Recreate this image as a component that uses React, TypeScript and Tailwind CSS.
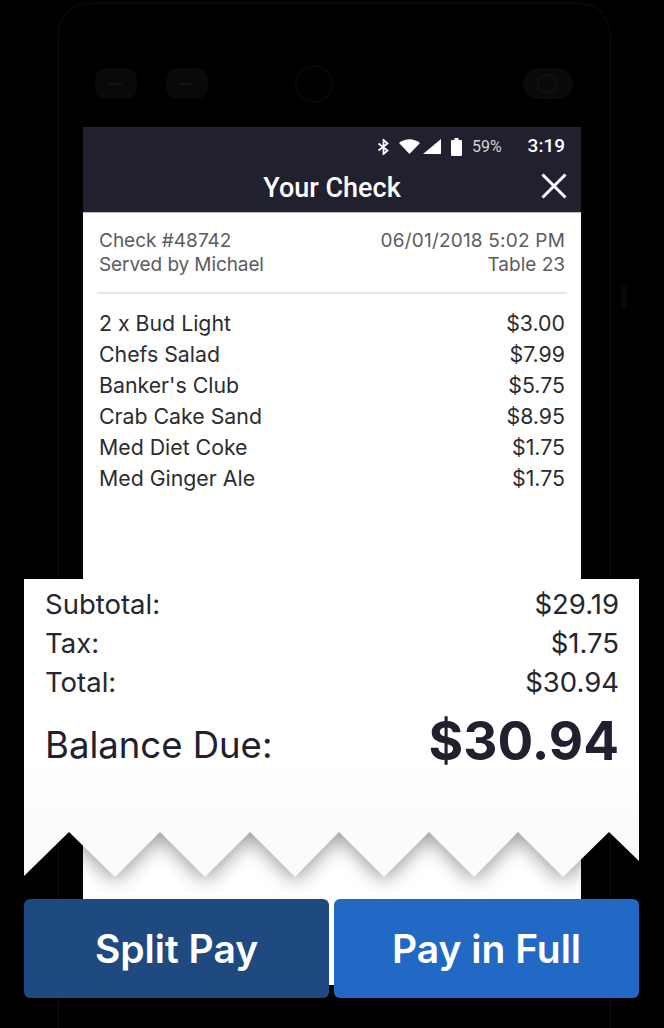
import React from "react";

const items = [
  { name: "2 x Bud Light", price: "$3.00" },
  { name: "Chefs Salad", price: "$7.99" },
  { name: "Banker's Club", price: "$5.75" },
  { name: "Crab Cake Sand", price: "$8.95" },
  { name: "Med Diet Coke", price: "$1.75" },
  { name: "Med Ginger Ale", price: "$1.75" },
];

const totals = [
  { label: "Subtotal:", value: "$29.19" },
  { label: "Tax:", value: "$1.75" },
  { label: "Total:", value: "$30.94" },
];

function PhoneShell() {
  return (
    <svg className="absolute inset-0" width="664" height="1028" viewBox="0 0 664 1028" fill="none">
      <path d="M58 1028V38Q58 3 94 3H574Q610 3 610 38V1028" stroke="#070707" strokeWidth="2" />
      <rect x="95" y="68" width="42" height="31" rx="11" fill="#090909" />
      <path d="M109 84h13" stroke="#131313" strokeWidth="2" />
      <rect x="166" y="68" width="42" height="31" rx="11" fill="#090909" />
      <path d="M180 84h13" stroke="#131313" strokeWidth="2" />
      <circle cx="314" cy="84" r="18" stroke="#070707" strokeWidth="2" />
      <rect x="523" y="68" width="50" height="31" rx="15" fill="#0a0a0a" />
      <circle cx="547" cy="84" r="9" stroke="#131313" strokeWidth="1.5" />
      <rect x="621" y="284" width="6" height="26" rx="2" fill="#070707" />
    </svg>
  );
}

function StatusBar() {
  return (
    <div className="flex h-[37px] items-center justify-end pr-[16px] pt-[2px] text-white">
      <svg width="13" height="16" viewBox="0 0 13 16" fill="none" stroke="#fff" strokeWidth="1.8" className="mr-[9px]">
        <path d="M1.500 4.500l9 7-4 3.500V1l4 3.500-9 7" />
      </svg>
      <svg width="21" height="15" viewBox="0 0 21 15" fill="#fff" className="mr-[3px]">
        <path d="M0 4Q10.500 -3.500 21 4L10.500 15Z" />
      </svg>
      <svg width="19" height="15" viewBox="0 0 19 15" fill="#fff" className="mr-[9px]">
        <path d="M18 0V15H0Z" />
      </svg>
      <svg width="11" height="18" viewBox="0 0 11 18" fill="#fff" className="mr-[10px]">
        <path d="M3.500 0h4v2H10a1 1 0 0 1 1 1v14a1 1 0 0 1-1 1H1a1 1 0 0 1-1-1V3a1 1 0 0 1 1-1h2.500Z" />
      </svg>
      <span className="mr-[26px] font-['Roboto',sans-serif] text-[16px] text-[#d5d5d8]">59%</span>
      <span className="font-['Roboto',sans-serif] text-[19px] font-medium">3:19</span>
    </div>
  );
}

function Header() {
  return (
    <div className="h-[86px] border-b border-[#b9b9c2] bg-[#20202e]">
      <StatusBar />
      <div className="relative flex h-[48px] items-center justify-center">
        <span className="font-['Roboto',sans-serif] text-[27px] font-medium text-white">Your Check</span>
        <svg width="26" height="26" viewBox="0 0 26 26" stroke="#fff" strokeWidth="3" className="absolute right-[14px] top-[9px]">
          <path d="M1.500 1.500l23 23M24.500 1.500l-23 23" />
        </svg>
      </div>
    </div>
  );
}

function Teeth() {
  const edge =
    "M0 -30H615V29L585 0L539 45L494 0L450 45L405 0L360 45L315 0L271 45L226 0L181 45L136 0L91 45L45 0L0 44Z";
  return (
    <svg width="615" height="67" viewBox="0 0 615 67" className="block">
      <defs>
        <filter id="tear" x="-10%" y="-50%" width="120%" height="250%">
          <feGaussianBlur stdDeviation="10" />
        </filter>
        <clipPath id="screen">
          <rect x="59" y="0" width="498" height="67" />
        </clipPath>
      </defs>
      <g clipPath="url(#screen)">
        <path d={edge} fill="#000" opacity="0.4" filter="url(#tear)" transform="translate(0 4)" />
      </g>
      <path d={edge} fill="#fbfbfb" />
    </svg>
  );
}

function Receipt() {
  return (
    <div className="-ml-[59px] -mr-[58px] shrink-0 font-['Inter',sans-serif]">
      <div className="h-[253px] bg-gradient-to-b from-white from-70% to-[#fbfbfb] pl-[21px] pr-[20px] pt-[6px] text-[#26262e]">
        {totals.map((row) => (
          <div key={row.label} className="flex h-[39px] items-center justify-between text-[27.5px]">
            <span>{row.label}</span>
            <span>{row.value}</span>
          </div>
        ))}
        <div className="mt-[13px] flex h-[60px] items-center justify-between text-[#20202e]">
          <span className="text-[36.5px]">Balance Due:</span>
          <span className="pb-[6px] text-[53px] font-bold">$30.94</span>
        </div>
      </div>
      <Teeth />
    </div>
  );
}

export default function App() {
  return (
    <div className="relative h-[1028px] w-[664px] overflow-hidden bg-black">
      <PhoneShell />
      <div className="relative ml-[83px] mt-[127px] flex h-[858px] w-[498px] flex-col bg-white">
        <Header />
        <div className="h-[366px] shrink-0 font-['Inter',sans-serif]">
          <div className="px-[16px] pt-[16px] text-[19px] leading-[24px] text-[#5b5b60]">
            <div className="flex justify-between">
              <span>Check #48742</span>
              <span className="tracking-[0.2px]">06/01/2018 5:02 PM</span>
            </div>
            <div className="flex justify-between">
              <span className="tracking-[-0.1px]">Served by Michael</span>
              <span>Table 23</span>
            </div>
          </div>
          <div className="mx-[14px] mt-[15px] h-[2px] bg-[#e6e6e6]" />
          <div className="px-[16px] pt-[14px] text-[21.3px] text-[#2c2c30]">
            {items.map((item) => (
              <div key={item.name} className="flex h-[31px] items-center justify-between">
                <span>{item.name}</span>
                <span>{item.price}</span>
              </div>
            ))}
          </div>
        </div>
        <Receipt />
        <div className="-ml-[59px] -mr-[58px] grid h-[99px] shrink-0 grid-cols-2 gap-[5px] font-['Inter',sans-serif] text-[39px] font-semibold text-white">
          <button className="rounded-[6px] bg-[#1f4a80] pt-[1px]">Split Pay</button>
          <button className="rounded-[6px] bg-[#2169c4] pt-[1px]">Pay in Full</button>
        </div>
      </div>
    </div>
  );
}
